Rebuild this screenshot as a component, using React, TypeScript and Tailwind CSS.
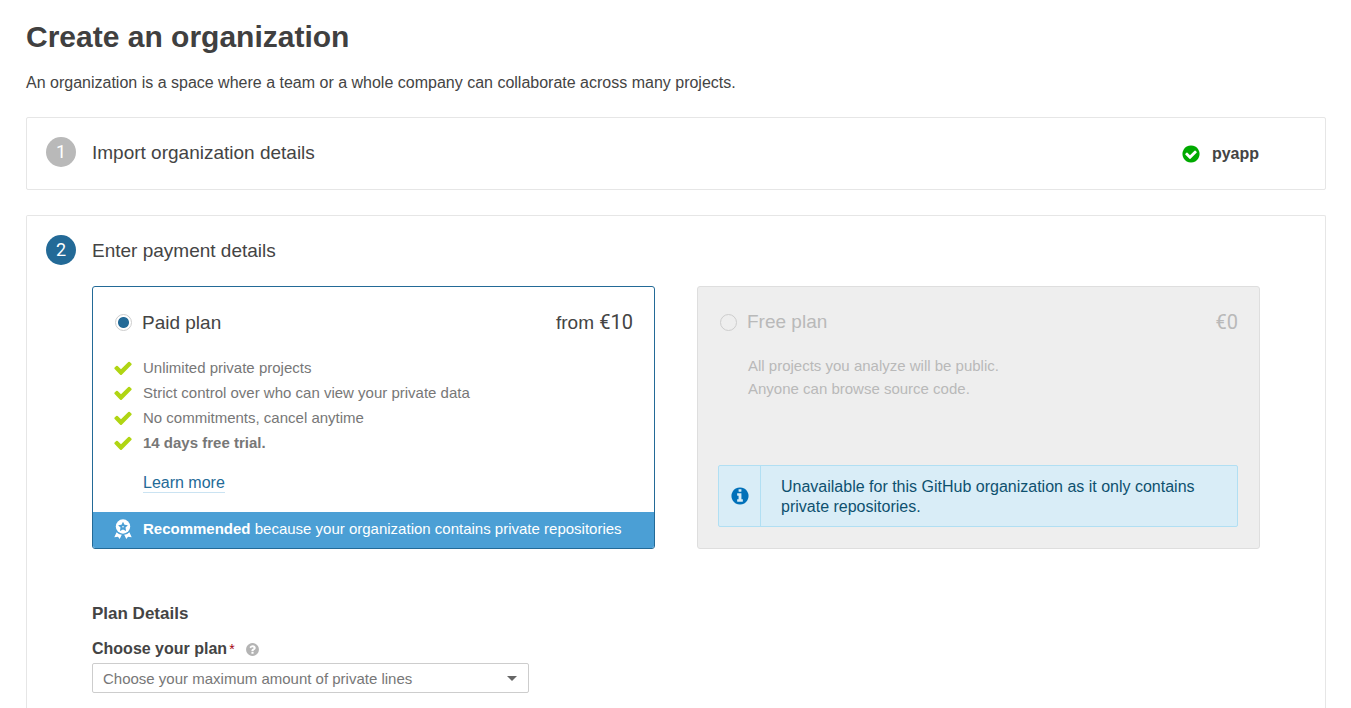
import type { ReactNode } from "react";

const ICONS = {
  check:
    "M1671 566q0 40-28 68l-724 724-136 136q-28 28-68 28t-68-28l-136-136-362-362q-28-28-28-68t28-68l136-136q28-28 68-28t68 28l294 295 656-657q28-28 68-28t68 28l136 136q28 28 28 68z",
  checkCircle:
    "M1412 734q0-28-18-46l-91-90q-19-19-45-19t-45 19l-408 407-226-226q-19-19-45-19t-45 19l-91 90q-18 18-18 46 0 27 18 45l362 362q19 19 45 19 27 0 46-19l543-543q18-18 18-45zm252 162q0 209-103 385.5t-279.5 279.5-385.5 103-385.5-103-279.5-279.5-103-385.5 103-385.5 279.5-279.5 385.5-103 385.5 103 279.5 279.5 103 385.5z",
  info:
    "M1152 1376v-160q0-14-9-23t-23-9h-96v-512q0-14-9-23t-23-9h-320q-14 0-23 9t-9 23v160q0 14 9 23t23 9h96v320h-96q-14 0-23 9t-9 23v160q0 14 9 23t23 9h448q14 0 23-9t9-23zm-128-896v-160q0-14-9-23t-23-9h-192q-14 0-23 9t-9 23v160q0 14 9 23t23 9h192q14 0 23-9t9-23zm640 416q0 209-103 385.5t-279.5 279.5-385.5 103-385.5-103-279.5-279.5-103-385.5 103-385.5 279.5-279.5 385.5-103 385.5 103 279.5 279.5 103 385.5z",
  question:
    "M1024 1376v-192q0-14-9-23t-23-9h-192q-14 0-23 9t-9 23v192q0 14 9 23t23 9h192q14 0 23-9t9-23zm256-672q0-88-55.5-163t-138.5-116-170-41q-243 0-371 213-15 24 8 42l132 100q7 6 19 6 16 0 25-12 53-68 86-92 34-24 86-24 48 0 85.5 26t37.5 59q0 38-20 61t-68 45q-63 28-115.5 86.5t-52.5 125.5v36q0 14 9 23t23 9h192q14 0 23-9t9-23q0-19 21.5-49.5t54.5-49.5q32-18 49-28.5t46-35 44.5-48 28-60.5 12.5-81zm384 192q0 209-103 385.5t-279.5 279.5-385.5 103-385.5-103-279.5-279.5-103-385.5 103-385.5 279.5-279.5 385.5-103 385.5 103 279.5 279.5 103 385.5z",
};

function Icon({ name, className }: { name: keyof typeof ICONS; className: string }) {
  return (
    <svg viewBox="0 0 1792 1792" fill="currentColor" aria-hidden="true" className={className}>
      <path d={ICONS[name]} />
    </svg>
  );
}

function AwardIcon() {
  return (
    <svg viewBox="0 0 20 20" className="size-5 shrink-0" aria-hidden="true">
      <circle cx="10" cy="7.500" r="7.200" fill="#fff" />
      <path
        d="M10 2.700l1.500 3 3.400.5-2.400 2.400.6 3.300L10 10.400l-3.100 1.500.6-3.300-2.400-2.400 3.400-.5z"
        fill="#4b9fd5"
      />
      <circle cx="10" cy="7.700" r=".8" fill="#fff" />
      <path
        d="M3.600 13.200q1.900 2.300 5.200 2.500l-2.100 4.300-1.700-2.300-3.700.5zM16.400 13.200q-1.900 2.300-5.200 2.500l2.100 4.300 1.700-2.300 3.700.5z"
        fill="#fff"
      />
    </svg>
  );
}

function StepHeading({ number, title, done }: { number: number; title: string; done?: boolean }) {
  return (
    <div className="flex items-center gap-4">
      <span
        className={
          "flex size-[30px] shrink-0 items-center justify-center rounded-full font-['Roboto',sans-serif] text-[18px] leading-[30px] text-white " +
          (done ? "bg-[#b9b9b9]" : "bg-[#236a97]")
        }
      >
        {number}
      </span>
      <h2 className="pt-0.5 text-[19px] leading-7">{title}</h2>
    </div>
  );
}

const RADIO =
  "size-[17px] shrink-0 appearance-none rounded-full border border-[#cdcdcd] checked:bg-[radial-gradient(circle,#236a97_5px,#fff_6px)]";

function Feature({ children }: { children: ReactNode }) {
  return (
    <li className="flex items-center gap-[10px]">
      <Icon name="check" className="size-5 shrink-0 text-[#b0d513]" />
      <span>{children}</span>
    </li>
  );
}

export default function App() {
  return (
    <main className="flex min-h-screen flex-col bg-white pl-[26px] pr-[25px] pt-[18px] font-['Liberation_Sans',Arial,sans-serif] text-[16px] leading-5 text-[#444]">
      <h1 className="text-[30px] font-bold leading-[38px] text-[#404040]">Create an organization</h1>
      <p className="mt-[17px]">
        An organization is a space where a team or a whole company can collaborate across many projects.
      </p>

      <section className="mt-6 flex items-start justify-between rounded-xs border border-[#e6e6e6] pb-[22px] pl-[19px] pr-[66px] pt-[19px]">
        <StepHeading number={1} title="Import organization details" done />
        <div className="flex items-center gap-[11px] pt-[7px]">
          <Icon name="checkCircle" className="size-5 text-[#00aa00]" />
          <strong>pyapp</strong>
        </div>
      </section>

      <section className="mt-[25px] grow rounded-t-xs border border-b-0 border-[#e6e6e6] pb-[15px] pl-[19px] pr-[65px] pt-[19px]">
        <StepHeading number={2} title="Enter payment details" />

        <div className="ml-[46px]">
          <div className="mt-[21px] grid grid-cols-2 gap-[42px]">
            <div className="flex flex-col overflow-hidden rounded-[3px] border border-[#236a97]">
              <div className="flex items-center justify-between pl-[22px] pr-[21px] pt-[23px]">
                <label className="flex items-center gap-[10px] text-[19px] leading-6">
                  <input type="radio" name="plan" defaultChecked className={RADIO} />
                  Paid plan
                </label>
                <span className="text-[19px] leading-6">
                  from <span className="font-['Roboto',sans-serif] text-[20px]">€10</span>
                </span>
              </div>
              <ul className="mt-5 pl-5 text-[15px] leading-[25px] text-[#777]">
                <Feature>Unlimited private projects</Feature>
                <Feature>Strict control over who can view your private data</Feature>
                <Feature>No commitments, cancel anytime</Feature>
                <Feature>
                  <strong>14 days free trial.</strong>
                </Feature>
              </ul>
              <div className="mb-[19px] mt-[18px] pl-[50px]">
                <a href="#learn-more" className="block w-fit border-b border-[#cae3f2] leading-[19px] text-[#236a97]">
                  Learn more
                </a>
              </div>
              <div className="mt-auto flex items-center gap-[10px] bg-[#4b9fd5] pb-[9px] pl-5 pt-[7px] text-[15px] text-white">
                <AwardIcon />
                <p>
                  <strong>Recommended</strong> because your organization contains private repositories
                </p>
              </div>
            </div>

            <div className="flex flex-col rounded-[3px] border border-[#dedede] bg-[#eee] pb-[21px] pl-5 pr-[21px] pt-[23px] text-[#b9b9b9]">
              <div className="flex items-center justify-between pl-[2px]">
                <label className="flex items-center gap-[10px] text-[19px] leading-6">
                  <input type="radio" name="plan" disabled className={RADIO} />
                  Free plan
                </label>
                <span className="font-['Roboto',sans-serif] text-[20px] leading-6">€0</span>
              </div>
              <p className="mt-5 pl-[30px] text-[15px] leading-[23px]">
                All projects you analyze will be public.
                <br />
                Anyone can browse source code.
              </p>
              <div className="mt-auto flex rounded-xs border border-[#b1dff3] bg-[#d9edf7] text-[#0e516f]">
                <div className="flex w-[42px] shrink-0 items-center justify-center border-r border-[#b1dff3]">
                  <Icon name="info" className="size-5 text-[#0271b9]" />
                </div>
                <p className="px-5 pb-[9px] pt-[11px]">
                  Unavailable for this GitHub organization as it only contains private repositories.
                </p>
              </div>
            </div>
          </div>

          <h3 className="mt-[54px] text-[17px] font-bold leading-[22px]">Plan Details</h3>
          <div className="mt-[14px] flex items-center gap-[10px]">
            <label htmlFor="plan-lines" className="font-bold">
              Choose your plan<span className="ml-0.5 align-top text-[14px] font-normal text-[#a4030f]">*</span>
            </label>
            <Icon name="question" className="size-[15px] text-[#b4b4b4]" />
          </div>
          <div className="relative mt-1 w-[437px] max-w-full">
            <select
              id="plan-lines"
              defaultValue=""
              className="h-[30px] w-full appearance-none rounded-xs border border-[#cdcdcd] bg-white pl-[10px] pr-8 pt-px text-[15px] text-[#777]"
            >
              <option value="">Choose your maximum amount of private lines</option>
            </select>
            <svg
              viewBox="0 0 10 5"
              className="pointer-events-none absolute right-3 top-[13px] h-[5px] w-[10px]"
              aria-hidden="true"
            >
              <path d="M0 0h10L5 5z" fill="#666" />
            </svg>
          </div>
        </div>
      </section>
    </main>
  );
}
